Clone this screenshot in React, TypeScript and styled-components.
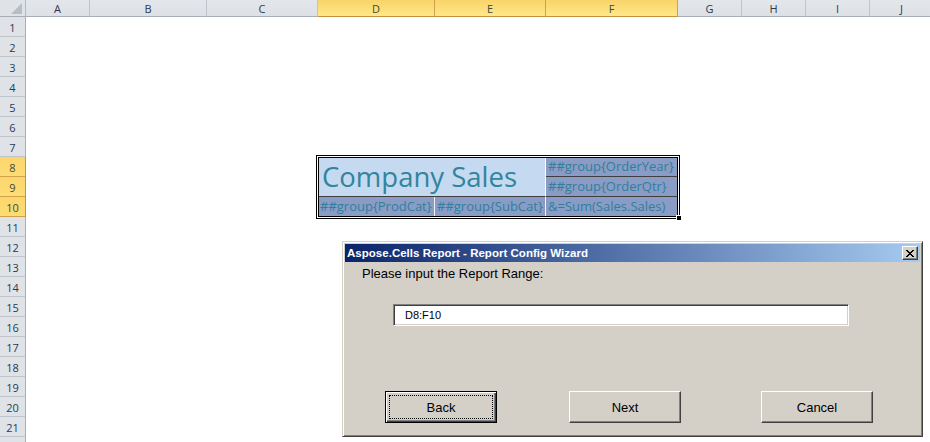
import React from "react";
import styled, { createGlobalStyle, css } from "styled-components";

const GlobalStyle = createGlobalStyle`
  html, body { margin: 0; padding: 0; background: #ffffff; overflow: hidden; }
  body { width: 930px; height: 442px; font-family: "Open Sans", "Liberation Sans", sans-serif; }
  * { box-sizing: border-box; }
`;

const COLUMNS = [
  { name: "A", w: 64 },
  { name: "B", w: 117 },
  { name: "C", w: 111 },
  { name: "D", w: 117, sel: true },
  { name: "E", w: 111, sel: true },
  { name: "F", w: 132, sel: true },
  { name: "G", w: 64 },
  { name: "H", w: 64 },
  { name: "I", w: 64 },
  { name: "J", w: 64 },
];
const ROW_COUNT = 22;
const VISIBLE_LABEL_ROWS = 21;
const SELECTED_ROWS = [8, 9, 10];

const Page = styled.div`
  position: relative;
  width: 930px;
  height: 442px;
  overflow: hidden;
  background: #ffffff;
`;

const Sheet = styled.div`
  display: grid;
  grid-template-columns: 26px ${COLUMNS.map((c) => `${c.w}px`).join(" ")};
  grid-template-rows: 17px repeat(${ROW_COUNT}, 20px);
`;

const headerBase = css`
  display: flex;
  align-items: center;
  justify-content: center;
  font-family: "Open Sans", sans-serif;
  font-size: 11px;
  line-height: 1;
`;

const Corner = styled.div`
  grid-row: 1;
  grid-column: 1;
  position: relative;
  background: #dfe3e8;
  border-right: 1px solid #b3b9c1;
  border-bottom: 1px solid #a7aeb6;
  &::after {
    content: "";
    position: absolute;
    right: 3px;
    bottom: 2px;
    width: 0;
    height: 0;
    border-left: 11px solid transparent;
    border-bottom: 11px solid #b8bdc3;
  }
`;

const ColHeader = styled.div<{ $col: number; $sel?: boolean }>`
  ${headerBase};
  grid-row: 1;
  grid-column: ${(p) => p.$col};
  padding-top: 1px;
  background: ${(p) =>
    p.$sel ? "linear-gradient(#f8d46a, #ffe888)" : "linear-gradient(#e3e6ea, #dde1e6)"};
  border-right: 1px solid ${(p) => (p.$sel ? "#d1a24a" : "#c0c5cb")};
  border-bottom: 1px solid ${(p) => (p.$sel ? "#c2923d" : "#a7aeb6")};
  color: ${(p) => (p.$sel ? "#3e4a3a" : "#2b394b")};
`;

const RowHeader = styled.div<{ $row: number; $sel?: boolean }>`
  ${headerBase};
  grid-column: 1;
  grid-row: ${(p) => p.$row + 1};
  background: ${(p) => (p.$sel ? "linear-gradient(#fbd66c, #fedd75)" : "#dfe3e8")};
  border-right: 1px solid ${(p) => (p.$sel ? "#c2923d" : "#a7aeb6")};
  border-bottom: 1px solid ${(p) => (p.$sel ? "#d1a24a" : "#c0c5cb")};
  color: ${(p) => (p.$sel ? "#3e4a3a" : "#2b394b")};
  padding-top: 1px;
`;

const Block = styled.div`
  grid-column: 5 / 8;
  grid-row: 9 / 12;
  position: relative;
  display: grid;
  grid-template-columns: 117px 111px 132px;
  grid-template-rows: repeat(3, 20px);
  &::after {
    content: "";
    position: absolute;
    inset: 0;
    border: 1px solid #000;
    box-shadow: 0 0 0 1px #fff, 0 0 0 2px #000;
    pointer-events: none;
  }
`;

const FillHandle = styled.div`
  position: absolute;
  right: -4px;
  bottom: -4px;
  width: 6px;
  height: 6px;
  background: #000;
  border: 1px solid #fff;
  z-index: 2;
`;

const TitleCell = styled.div`
  grid-column: 1 / 3;
  grid-row: 1 / 3;
  display: flex;
  align-items: center;
  padding: 0 0 1px 4px;
  background: #c5d9f1;
  border-right: 1px solid #ffffff;
  border-bottom: 1px solid #3f3f3f;
  color: #31859c;
  font-family: "Open Sans", sans-serif;
  font-size: 27.5px;
  white-space: nowrap;
  overflow: hidden;
`;

const FieldCell = styled.div<{ $col: number; $row: number; $line: "light" | "dark" | "none" }>`
  grid-column: ${(p) => p.$col};
  grid-row: ${(p) => p.$row};
  display: flex;
  align-items: flex-end;
  padding: 0 0 1px 2px;
  background: #8a9cc6;
  color: #2f7f9a;
  font-family: "Open Sans", sans-serif;
  font-size: 13px;
  line-height: 17px;
  white-space: nowrap;
  overflow: hidden;
  border-right: 1px solid ${(p) => (p.$line === "light" ? "#f2f2f2" : "transparent")};
  border-bottom: 1px solid ${(p) => (p.$line === "dark" ? "#3f3f3f" : "transparent")};
`;

/* ---------- Dialog ---------- */

const Window = styled.div`
  position: absolute;
  left: 342px;
  top: 241px;
  width: 581px;
  height: 196px;
  padding: 1px;
  background: #d4d0c8;
  border: 1px solid;
  border-color: #d4d0c8 #404040 #404040 #d4d0c8;
  box-shadow: inset 1px 1px #ffffff, inset -1px -1px #808080;
  display: flex;
  flex-direction: column;
  font-family: "Liberation Sans", Arial, sans-serif;
  z-index: 5;
`;

const TitleBar = styled.div`
  height: 18px;
  margin: 1px 1px 0 1px;
  display: flex;
  align-items: center;
  justify-content: space-between;
  padding: 0 2px 0 2px;
  background: linear-gradient(to right, #0a246a, #a6caf0);
`;

const TitleText = styled.span`
  color: #ffffff;
  font-family: "Liberation Sans", Arial, sans-serif;
  font-weight: bold;
  font-size: 11.5px;
  letter-spacing: 0.02px;
  white-space: nowrap;
`;

const CloseButton = styled.div`
  width: 16px;
  height: 14px;
  display: flex;
  align-items: center;
  justify-content: center;
  background: #d4d0c8;
  border: 1px solid;
  border-color: #ffffff #404040 #404040 #ffffff;
  box-shadow: inset -1px -1px #808080;
`;

const Body = styled.div`
  display: flex;
  flex-direction: column;
`;

const Label = styled.div`
  margin: 4px 0 0 18px;
  font-size: 13px;
  line-height: 15px;
  color: #000;
`;

const TextBox = styled.div`
  margin: 23px 0 0 49px;
  width: 456px;
  height: 22px;
  display: flex;
  align-items: center;
  padding-left: 11px;
  background: #ffffff;
  border: 1px solid;
  border-color: #808080 #ffffff #ffffff #808080;
  box-shadow: inset 1px 1px #404040, inset -1px -1px #d4d0c8;
  font-size: 11px;
  color: #000;
`;

const ButtonRow = styled.div`
  display: flex;
  margin-top: 65px;
`;

const Button = styled.div<{ $ml: number; $focused?: boolean }>`
  position: relative;
  margin-left: ${(p) => p.$ml}px;
  width: 112px;
  height: 32px;
  display: flex;
  align-items: center;
  justify-content: center;
  background: #d4d0c8;
  font-size: 13px;
  color: #000;
  border: 1px solid;
  ${(p) =>
    p.$focused
      ? css`
          border-color: #000;
          box-shadow: inset 1px 1px #ffffff, inset -1px -1px #404040, inset -2px -2px #808080;
          &::after {
            content: "";
            position: absolute;
            inset: 3px;
            border: 1px dotted #000;
          }
        `
      : css`
          border-color: #ffffff #404040 #404040 #ffffff;
          box-shadow: inset -1px -1px #808080;
        `}
`;

const CloseIcon = () => (
  <svg width="8" height="7" viewBox="0 0 8 7" shapeRendering="crispEdges">
    <path
      fill="#000"
      d="M0 0h2v1h-2zM6 0h2v1h-2zM1 1h2v1h-2zM5 1h2v1h-2zM2 2h4v1h-4zM3 3h2v1h-2zM2 4h4v1h-4zM1 5h2v1h-2zM5 5h2v1h-2zM0 6h2v1h-2zM6 6h2v1h-2z"
    />
  </svg>
);

export default function App() {
  return (
    <Page>
      <GlobalStyle />
      <Sheet>
        <Corner />
        {COLUMNS.map((c, i) => (
          <ColHeader key={c.name} $col={i + 2} $sel={c.sel}>
            {c.name}
          </ColHeader>
        ))}
        {Array.from({ length: ROW_COUNT }, (_, i) => i + 1).map((r) => (
          <RowHeader key={r} $row={r} $sel={SELECTED_ROWS.includes(r)}>
            {r <= VISIBLE_LABEL_ROWS ? r : null}
          </RowHeader>
        ))}
        <Block>
          <TitleCell>Company Sales</TitleCell>
          <FieldCell $col={3} $row={1} $line="dark">##group{"{"}OrderYear{"}"}</FieldCell>
          <FieldCell $col={3} $row={2} $line="dark">##group{"{"}OrderQtr{"}"}</FieldCell>
          <FieldCell $col={1} $row={3} $line="light">##group{"{"}ProdCat{"}"}</FieldCell>
          <FieldCell $col={2} $row={3} $line="light">##group{"{"}SubCat{"}"}</FieldCell>
          <FieldCell $col={3} $row={3} $line="none">&amp;=Sum(Sales.Sales)</FieldCell>
          <FillHandle />
        </Block>
      </Sheet>

      <Window>
        <TitleBar>
          <TitleText>Aspose.Cells Report - Report Config Wizard</TitleText>
          <CloseButton>
            <CloseIcon />
          </CloseButton>
        </TitleBar>
        <Body>
          <Label>Please input the Report Range:</Label>
          <TextBox>D8:F10</TextBox>
          <ButtonRow>
            <Button $ml={41} $focused>
              Back
            </Button>
            <Button $ml={72}>Next</Button>
            <Button $ml={80}>Cancel</Button>
          </ButtonRow>
        </Body>
      </Window>
    </Page>
  );
}
